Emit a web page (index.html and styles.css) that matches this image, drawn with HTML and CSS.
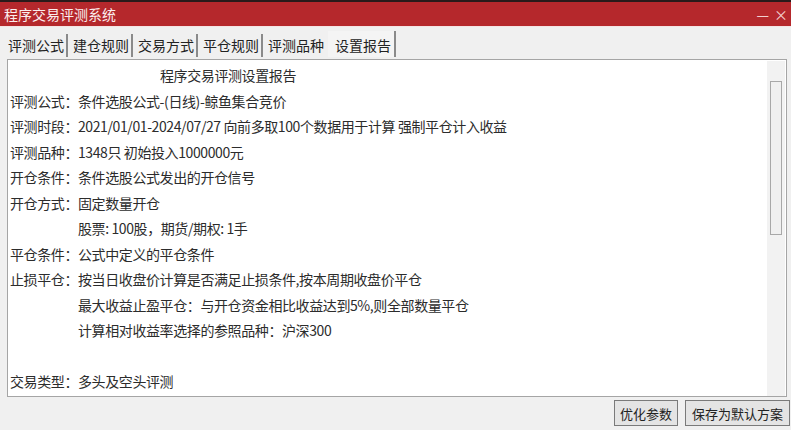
FILE: index.html
```html
<!DOCTYPE html>
<html lang="zh-CN">
<head>
<meta charset="utf-8">
<title>程序交易评测系统</title>
<link rel="stylesheet" href="styles.css">
</head>
<body>
<div class="window">
  <div class="titlebar">
    <span class="title">程序交易评测系统</span>
    <span class="controls"><span class="min">—</span><span class="close">×</span></span>
  </div>
  <div class="tabs">
    <span class="tab">评测公式</span>
    <span class="tab">建仓规则</span>
    <span class="tab">交易方式</span>
    <span class="tab">平仓规则</span>
    <span class="tab">评测品种</span>
    <span class="tab active">设置报告</span>
  </div>
  <div class="panel">
    <div class="report">
      <div class="line heading">程序交易评测设置报告</div>
      <div class="line">评测公式：条件选股公式-(日线)-鲸鱼集合竞价</div>
      <div class="line">评测时段：2021/01/01-2024/07/27 向前多取100个数据用于计算 强制平仓计入收益</div>
      <div class="line">评测品种：1348只 初始投入1000000元</div>
      <div class="line">开仓条件：条件选股公式发出的开仓信号</div>
      <div class="line">开仓方式：固定数量开仓</div>
      <div class="line sub">股票: 100股，期货/期权: 1手</div>
      <div class="line">平仓条件：公式中定义的平仓条件</div>
      <div class="line">止损平仓：按当日收盘价计算是否满足止损条件,按本周期收盘价平仓</div>
      <div class="line sub">最大收益止盈平仓：与开仓资金相比收益达到5%,则全部数量平仓</div>
      <div class="line sub">计算相对收益率选择的参照品种：沪深300</div>
      <div class="line">&nbsp;</div>
      <div class="line">交易类型：多头及空头评测</div>
    </div>
    <div class="scrollbar"><div class="thumb"></div></div>
  </div>
  <div class="footer">
    <button class="btn">优化参数</button>
    <button class="btn wide">保存为默认方案</button>
  </div>
</div>
</body>
</html>
```

FILE: styles.css
```css
html, body {
  margin: 0;
  padding: 0;
  background: #f0f0f0;
  overflow: hidden;
}
body {
  width: 791px;
  height: 430px;
  font-family: "Noto Sans CJK SC", "Noto Sans", sans-serif;
  color: #2a2a2a;
}
.window {
  width: 800px;
  height: 430px;
  display: flex;
  flex-direction: column;
  background: #f0f0f0;
}
.titlebar {
  height: 24px;
  border-top: 2px solid #2a1a1a;
  border-bottom: 1px solid #f4e4e4;
  background: #b5282c;
  display: flex;
  align-items: center;
  justify-content: space-between;
  padding-left: 4px;
}
.title {
  color: #fbeeee;
  font-size: 14px;
  line-height: 24px;
}
.controls {
  display: flex;
  gap: 5px;
  color: #f3cfcf;
  font-size: 14px;
  margin-right: 12px;
}
.tabs {
  height: 30px;
  display: flex;
  align-items: flex-end;
  padding-left: 3px;
}
.tab {
  font-size: 14px;
  line-height: 22px;
  padding: 0 2px 1px 5px;
  border-right: 2px solid #8a8a8a;
  color: #222;
}
.tab:nth-child(5) {
  border-right: none;
  padding-right: 3px;
}
.tab.active {
  background: #f4f4f4;
  padding: 3px 3px 1px 7px;
  margin-left: 1px;
}
.panel {
  margin: 2px 13px 0 7px;
  height: 336px;
  border: 1px solid #a5a5a5;
  background: #ffffff;
  display: flex;
}
.report {
  flex: 1;
  padding: 3px 0 0 2px;
  font-size: 14px;
  letter-spacing: -0.4px;
  line-height: 25.5px;
  color: #2c2c2c;
}
.line {
  white-space: nowrap;
}
.heading {
  padding-left: 150px;
}
.sub {
  padding-left: 68px;
}
.scrollbar {
  width: 18px;
  margin: 1px 1px 0 0;
  background: #f2f2f2;
  padding-top: 20px;
  display: flex;
  justify-content: center;
}
.thumb {
  width: 10px;
  height: 152px;
  border: 1px solid #a8a8a8;
  background: #f0f0f0;
}
.footer {
  display: flex;
  justify-content: flex-end;
  gap: 7px;
  padding: 3px 10px 0 0;
}
.btn {
  height: 26px;
  padding: 0 5px;
  font-family: "Noto Sans CJK SC", "Noto Sans", sans-serif;
  font-size: 13px;
  color: #222;
  background: #e4e4e4;
  border: 1px solid #7a7a7a;
  border-radius: 0;
}
.btn.wide {
  padding: 0 6px;
}
```
